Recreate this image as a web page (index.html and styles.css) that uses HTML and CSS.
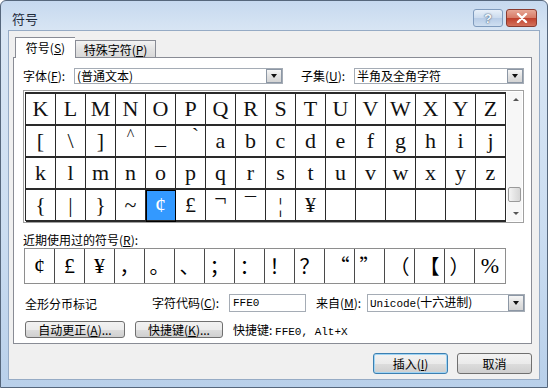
FILE: index.html
```html
<!DOCTYPE html>
<html lang="zh-CN">
<head>
    <meta charset="UTF-8">
    <title>符号</title>
    <link rel="stylesheet" href="styles.css">
</head>
<body>
    <div class="window">
        <div class="titlebar">
            <span class="title">符号</span>
            <div class="caption-btns">
                <span class="cap-btn help">?</span>
                <span class="cap-btn close">
                    <svg width="12" height="10" viewBox="0 0 12 10"><path d="M2 1 L10 9 M10 1 L2 9" stroke="#fff" stroke-width="2.4" stroke-linecap="round"/></svg>
                </span>
            </div>
        </div>
        <div class="client">
            <div class="tabs">
                <span class="tab active">符号(<u>S</u>)</span>
                <span class="tab">特殊字符(<u>P</u>)</span>
            </div>
            <div class="panel">
                <div class="font-row">
                    <span class="lbl font-lbl">字体(<u>F</u>):</span>
                    <div class="combo combo-font"><span class="combo-text">(普通文本)</span><span class="drop"></span></div>
                    <span class="lbl subset-lbl">子集(<u>U</u>):</span>
                    <div class="combo combo-subset"><span class="combo-text">半角及全角字符</span><span class="drop"></span></div>
                </div>

                <div class="charmap">
                    <div class="cells">
                        <span>K</span><span>L</span><span>M</span><span>N</span><span>O</span><span>P</span><span>Q</span><span>R</span>
                        <span>S</span><span>T</span><span>U</span><span>V</span><span>W</span><span>X</span><span>Y</span><span>Z</span>
                        <span>[</span><span>\</span><span>]</span><span class="hat">^</span><span class="under">_</span><span class="grave">`</span><span>a</span><span>b</span>
                        <span>c</span><span>d</span><span>e</span><span>f</span><span>g</span><span>h</span><span>i</span><span>j</span>
                        <span>k</span><span>l</span><span>m</span><span>n</span><span>o</span><span>p</span><span>q</span><span>r</span>
                        <span>s</span><span>t</span><span>u</span><span>v</span><span>w</span><span>x</span><span>y</span><span>z</span>
                        <span>{</span><span>|</span><span>}</span><span>~</span><span class="selected">¢</span><span>£</span><span class="notsign">¬</span><span>¯</span>
                        <span>¦</span><span>¥</span><span></span><span></span><span></span><span></span><span></span><span></span>
                    </div>
                    <div class="scrollbar">
                        <span class="arrow up"></span>
                        <div class="track"><span class="thumb"></span></div>
                        <span class="arrow down"></span>
                    </div>
                </div>

                <div class="recent-label">近期使用过的符号(<u>R</u>):</div>
                <div class="recent">
                    <span>¢</span><span>£</span><span>¥</span><span class="cjk">，</span>
                    <span class="cjk">。</span><span class="cjk">、</span><span class="cjk">；</span><span class="cjk">：</span>
                    <span class="cjk">！</span><span class="cjk">？</span><span class="cjk">“</span><span class="cjk">”</span>
                    <span class="cjk">（</span><span class="cjk">【</span><span class="cjk">）</span><span>%</span>
                </div>

                <div class="info-row">
                    <span class="char-name">全形分币标记</span>
                    <span class="lbl code-lbl">字符代码(<u>C</u>):</span>
                    <div class="textbox mono">FFE0</div>
                    <span class="lbl from-lbl">来自(<u>M</u>):</span>
                    <div class="combo combo-from"><span class="combo-text"><span class="mono">Unicode</span>(十六进制)</span><span class="drop"></span></div>
                </div>

                <div class="btn-row">
                    <span class="btn autocorrect">自动更正(<u>A</u>)...</span>
                    <span class="btn shortcut">快捷键(<u>K</u>)...</span>
                    <span class="shortcut-text">快捷键: <span class="mono">FFE0, Alt+X</span></span>
                </div>
            </div>

            <div class="dialog-btns">
                <span class="btn big default">插入(<u>I</u>)</span>
                <span class="btn big">取消</span>
            </div>
        </div>
    </div>
</body>
</html>
```

FILE: styles.css
```css
* {
    box-sizing: border-box;
}
body {
    margin: 0;
    font-family: "Noto Sans CJK SC", "Liberation Sans", sans-serif;
    font-size: 12px;
    color: #000;
    background: #fff;
}
u {
    text-decoration: underline;
}
.mono {
    font-family: "Liberation Mono", monospace;
    font-size: 11px;
}

/* window frame */
.window {
    width: 548px;
    height: 388px;
    border: 1px solid #56677c;
    border-radius: 6px 6px 0 0;
    padding: 0 7px 7px;
    background: linear-gradient(#c6d9ef, #d9e6f4 8%, #cbddf1 60%, #b9d0ea);
    display: flex;
    flex-direction: column;
}
.titlebar {
    height: 29px;
    padding: 5px 3px 0 4px;
    display: flex;
    align-items: center;
    justify-content: space-between;
}
.title {
    font-size: 13px;
    color: #1e2a3a;
}
.caption-btns {
    display: flex;
    gap: 3px;
}
.cap-btn {
    height: 18px;
    border-radius: 3px;
    display: flex;
    align-items: center;
    justify-content: center;
}
.help {
    width: 30px;
    border: 1px solid #7f9bbd;
    background: linear-gradient(#e8f0f9, #cbdbee 50%, #b7cce6 51%, #cfdff1);
    color: #f4f8fc;
    font-family: "Liberation Sans", sans-serif;
    font-weight: bold;
    font-size: 13px;
    text-shadow: 0 0 2px #47607e, 0 0 1px #47607e;
}
.close {
    width: 31px;
    border: 1px solid #8a3b30;
    background: linear-gradient(#e7a796, #d77a66 50%, #c0402c 51%, #d3715b);
}

/* client area */
.client {
    flex: 1;
    background: #f0f0f0;
    border: 1px solid #96abc5;
    padding: 6px 7px 0 4px;
    display: flex;
    flex-direction: column;
}
.tabs {
    height: 20px;
    display: flex;
    align-items: flex-end;
    padding-left: 2px;
    position: relative;
    z-index: 1;
}
.tab {
    height: 17px;
    width: 81px;
    border: 1px solid #898c95;
    border-bottom: none;
    background: linear-gradient(#f3f3f3, #e3e3e3 50%, #d8d8d8);
    display: flex;
    align-items: center;
    justify-content: center;
    font-size: 12px;
}
.tab.active {
    height: 21px;
    width: 60px;
    margin-bottom: -1px;
    background: #fff;
    border-right: none;
    padding-bottom: 1px;
}
.panel {
    height: 287px;
    border: 1px solid #898c95;
    background: #fff;
    padding: 10px 0 0 9px;
    display: flex;
    flex-direction: column;
}

/* font / subset row */
.font-row {
    height: 16px;
    display: flex;
    align-items: center;
}
.lbl {
    line-height: 16px;
    white-space: nowrap;
}
.font-lbl {
    width: 51px;
}
.subset-lbl {
    width: 54px;
    margin-left: 17px;
    padding-left: 1px;
}
.combo {
    height: 16px;
    border: 1px solid #a5acb5;
    background: #fff;
    display: flex;
    align-items: center;
    justify-content: space-between;
}
.combo-text {
    padding-left: 2px;
    line-height: 14px;
    white-space: nowrap;
}
.combo-font {
    width: 209px;
}
.combo-subset {
    width: 170px;
}
.drop {
    width: 16px;
    height: 14px;
    border: 1px solid #8c97a5;
    background: linear-gradient(#f6f6f6, #e2e2e2 50%, #d4d4d4);
    position: relative;
}
.drop::after {
    content: "";
    position: absolute;
    left: 4px;
    top: 4px;
    border-left: 3px solid transparent;
    border-right: 3px solid transparent;
    border-top: 4px solid #111;
}

/* character grid */
.charmap {
    margin-top: 6px;
    width: 501px;
    height: 133px;
    border: 1px solid #a0a0a0;
    padding: 1px;
    display: flex;
}
.cells {
    display: grid;
    grid-template-columns: repeat(16, 30px);
    grid-template-rows: repeat(4, 32px);
    border-left: 1px solid #2a2a2a;
    border-top: 2px solid #2a2a2a;
}
.cells span {
    border-right: 1px solid #2a2a2a;
    border-bottom: 2px solid #2a2a2a;
    font-family: "Liberation Serif", serif;
    font-size: 22px;
    line-height: 30px;
    text-align: center;
    color: #111;
}
.cells .hat {
    font-size: 16px;
    line-height: 18px;
}
.cells .under {
    line-height: 22px;
}
.cells .grave {
    line-height: 20px;
    padding-left: 10px;
}
.cells .notsign {
    line-height: 18px;
}
.cells .selected {
    background: #3399ff;
    color: #fff;
    outline: 1px solid #000;
    outline-offset: -1px;
}
.scrollbar {
    width: 17px;
    margin-left: 1px;
    display: flex;
    flex-direction: column;
    background: #f7f7f7;
}
.arrow {
    height: 15px;
    position: relative;
}
.arrow::after {
    content: "";
    position: absolute;
    left: 6px;
    top: 6px;
    border-left: 3px solid transparent;
    border-right: 3px solid transparent;
}
.arrow.up::after {
    border-bottom: 3px solid #555;
}
.arrow.down::after {
    border-top: 3px solid #555;
}
.track {
    flex: 1;
    display: flex;
    flex-direction: column;
    justify-content: flex-end;
    padding: 0 1px 4px;
}
.thumb {
    height: 15px;
    border: 1px solid #9a9a9a;
    border-radius: 2px;
    background: linear-gradient(90deg, #f4f4f4, #e4e4e4 50%, #d6d6d6);
}

/* recently used */
.recent-label {
    margin-top: 9px;
    height: 16px;
    line-height: 16px;
}
.recent {
    margin-left: 1px;
    width: 482px;
    height: 36px;
    display: flex;
    border: 1px solid #8e8e8e;
}
.recent span {
    width: 30px;
    border-right: 1px solid #4a4a4a;
    font-family: "Liberation Serif", serif;
    font-size: 22px;
    line-height: 33px;
    text-align: center;
}
.recent span:last-child {
    border-right: none;
}
.recent .cjk {
    font-family: "Noto Sans CJK SC", serif;
    font-size: 20px;
}

/* info row */
.info-row {
    margin-top: 10px;
    height: 18px;
    display: flex;
    align-items: center;
}
.char-name {
    width: 129px;
    padding-left: 2px;
}
.code-lbl {
    width: 77px;
}
.textbox {
    width: 77px;
    height: 18px;
    border: 1px solid #a5acb5;
    padding-left: 3px;
    line-height: 16px;
}
.from-lbl {
    width: 51px;
    margin-left: 10px;
}
.combo-from {
    width: 158px;
    height: 18px;
}
.combo-from .drop {
    height: 16px;
}
.combo-from .drop::after {
    top: 5px;
}

/* buttons */
.btn-row {
    margin-top: 9px;
    height: 17px;
    display: flex;
    align-items: center;
}
.btn {
    height: 17px;
    border: 1px solid #707070;
    border-radius: 3px;
    background: linear-gradient(#f2f2f2, #ebebeb 50%, #dddddd 51%, #cfcfcf);
    display: flex;
    align-items: center;
    justify-content: center;
    white-space: nowrap;
}
.autocorrect {
    width: 100px;
    margin-left: 2px;
}
.shortcut {
    width: 88px;
    margin-left: 10px;
}
.shortcut-text {
    margin-left: 10px;
}
.dialog-btns {
    margin-top: 9px;
    display: flex;
    justify-content: flex-end;
    gap: 9px;
}
.btn.big {
    width: 75px;
    height: 21px;
}
.btn.default {
    border-color: #3c7fb1;
    box-shadow: inset 0 0 0 1px #9fd4f4;
}
```
